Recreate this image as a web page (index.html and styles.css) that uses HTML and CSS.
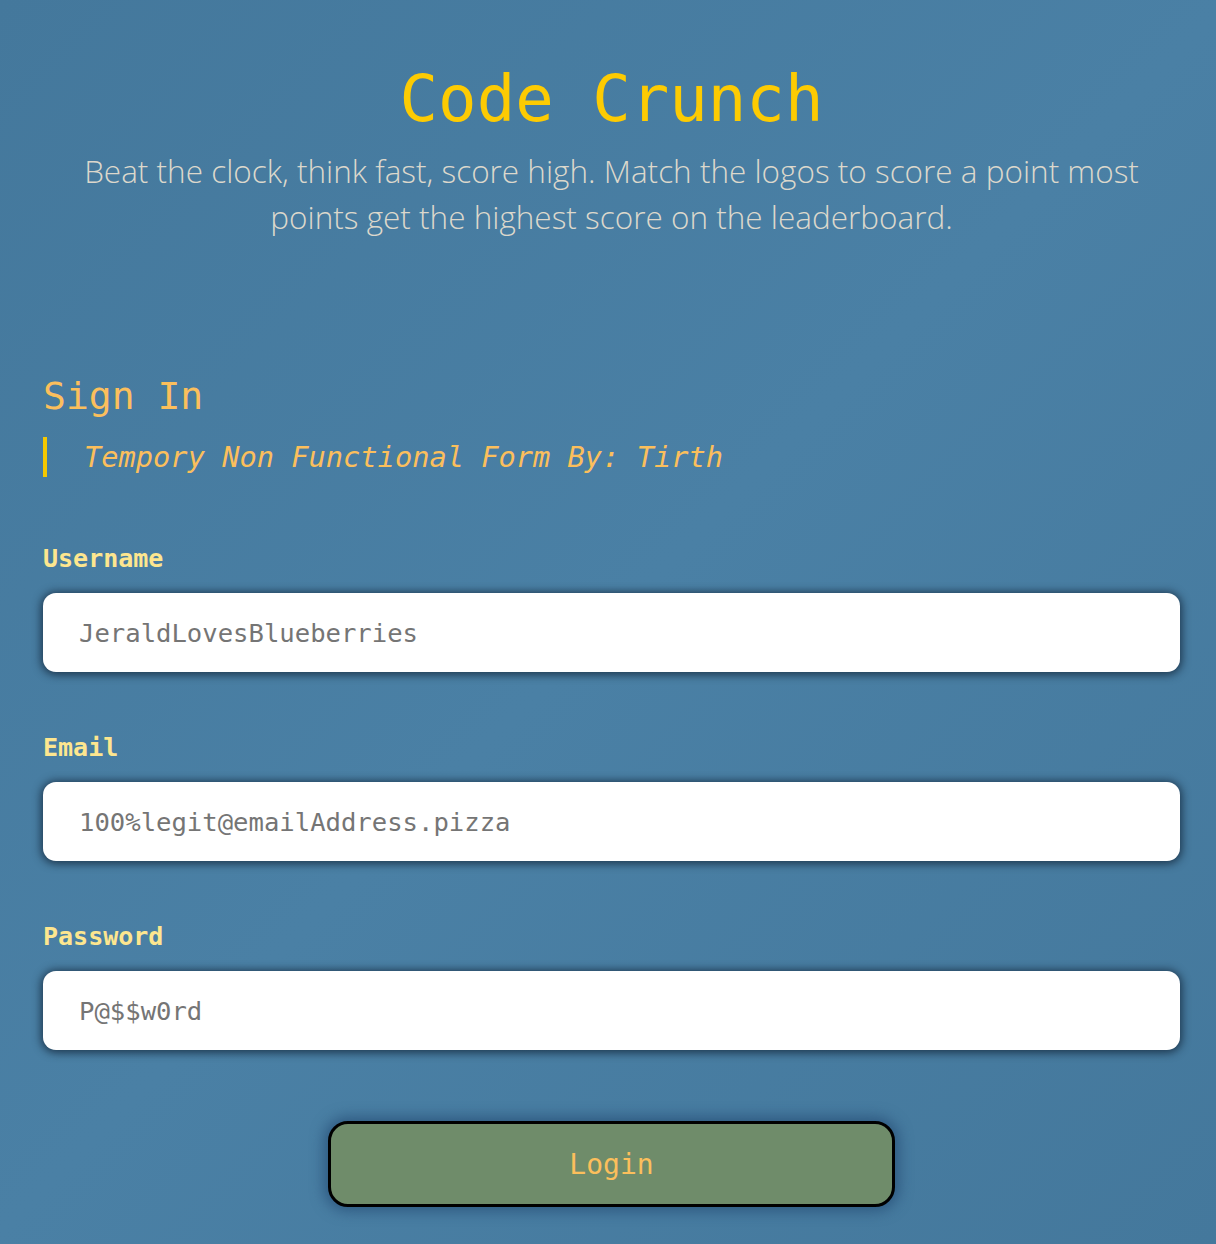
FILE: index.html
```html
<!DOCTYPE html>
<html lang="en">
<head>
<meta charset="utf-8">
<title>Code Crunch</title>
<link rel="stylesheet" href="styles.css">
</head>
<body>
<div class="page">
  <header class="hero">
    <h1 class="title">Code Crunch</h1>
    <p class="tagline">Beat the clock, think fast, score high. Match the logos to score a point most points get the highest score on the leaderboard.</p>
  </header>
  <main class="signin">
    <h2 class="signin-title">Sign In</h2>
    <blockquote class="note">Tempory Non Functional Form By: Tirth</blockquote>
    <form class="form">
      <div class="field">
        <label class="label" for="u">Username</label>
        <input class="input" id="u" type="text" placeholder="JeraldLovesBlueberries">
      </div>
      <div class="field">
        <label class="label" for="e">Email</label>
        <input class="input" id="e" type="text" placeholder="100%legit@emailAddress.pizza">
      </div>
      <div class="field">
        <label class="label" for="p">Password</label>
        <input class="input" id="p" type="text" placeholder="P@$$w0rd">
      </div>
      <div class="actions">
        <button class="btn" type="button">Login</button>
      </div>
    </form>
  </main>
</div>
</body>
</html>
```

FILE: styles.css
```css
html, body {
  margin: 0;
  padding: 0;
}
body {
  background: linear-gradient(135deg, #44789c 0%, #4a80a5 50%, #44789c 100%);
  min-height: 1244px;
  font-family: "DejaVu Sans Mono", "Liberation Mono", monospace;
}
.page {
  padding: 0 36px 0 43px;
}
.hero {
  text-align: center;
  padding-top: 59px;
}
.title {
  margin: 0;
  font-family: "DejaVu Sans Mono", monospace;
  font-weight: 400;
  font-size: 64px;
  line-height: 80px;
  color: #fdcb02;
}
.tagline {
  margin: 9px 0 0;
  font-family: "Open Sans", sans-serif;
  font-weight: 300;
  font-size: 31.5px;
  line-height: 46px;
  color: #dcd8cc;
}
.signin {
  padding-top: 131px;
}
.signin-title {
  margin: 0;
  font-weight: 400;
  font-size: 38px;
  line-height: 50px;
  color: #fbbf5c;
}
.note {
  margin: 16px 0 0;
  border-left: 4px solid #f5c800;
  padding: 0 0 0 37px;
  font-style: italic;
  font-size: 28.7px;
  line-height: 40px;
  color: #fbbf5c;
}
.form {
  margin-top: 67px;
}
.field {
  margin-bottom: 61px;
}
.label {
  display: block;
  font-weight: 700;
  font-size: 25px;
  line-height: 30px;
  color: #fde68f;
  margin-bottom: 19px;
}
.input {
  display: block;
  box-sizing: border-box;
  width: 100%;
  height: 79px;
  border: none;
  border-radius: 13px;
  background: #fff;
  padding: 0 36px;
  font-family: "DejaVu Sans Mono", monospace;
  font-size: 25.6px;
  color: #333;
  box-shadow: 0 1px 9px 2px rgba(20, 40, 60, 0.8);
  outline: none;
}
.input::placeholder {
  color: #757575;
}
.actions {
  display: flex;
  justify-content: center;
  margin-top: 71px;
}
.btn {
  width: 567px;
  height: 86px;
  border: 3px solid #000;
  border-radius: 20px;
  background: #6f8c6a;
  font-family: "DejaVu Sans Mono", monospace;
  font-size: 28px;
  color: #fbbf5c;
  box-shadow: 0 0 14px 4px rgba(40, 80, 120, 0.8);
}
```
